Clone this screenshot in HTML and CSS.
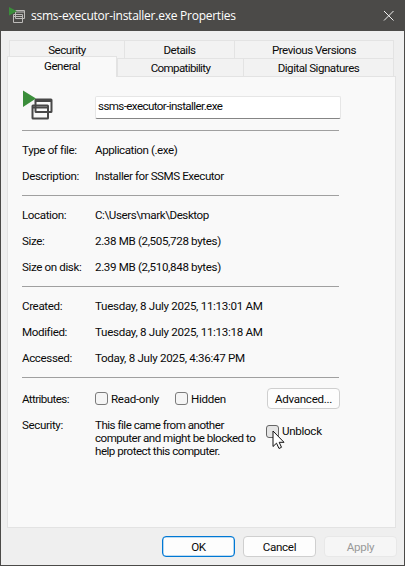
FILE: index.html
```html
<!DOCTYPE html>
<html lang="en">
<head>
<meta charset="utf-8">
<title>ssms-executor-installer.exe Properties</title>
<link rel="stylesheet" href="styles.css">
</head>
<body>
<div class="window">
  <header class="titlebar">
    <svg class="title-icon" width="18" height="18" viewBox="0 0 18 18"><g fill="none" stroke="#bdbbb9"><path d="M6.500 4.500h9v8h-9zM7 6h8.500"/><path d="M4.500 8.500h9v8h-9zM4.500 10.500h9"/></g><path d="M0 1l8 4.200L0 9.500z" fill="#3b8e3b"/></svg>
    <span class="title">ssms-executor-installer.exe Properties</span>
    <svg class="close" width="12" height="12" viewBox="0 0 12 12"><path d="M1 1l9.500 9.500M10.500 1L1 10.500" fill="none" stroke="#f2f2f2"/></svg>
  </header>
  <main class="body">
    <nav class="tabs">
      <div class="tab-row back">
        <span class="tab security">Security</span><span class="tab details">Details</span><span class="tab versions">Previous Versions</span>
      </div>
      <div class="tab-row front">
        <span class="tab general">General</span><span class="tab compat">Compatibility</span><span class="tab signatures">Digital Signatures</span>
      </div>
    </nav>
    <div class="panel">
      <div class="file-head">
        <svg class="file-icon" width="32" height="32" viewBox="0 0 32 32"><g fill="none" stroke="#484848" stroke-width="2"><rect x="13.500" y="9.500" width="16" height="12.500" rx=".5"/><path d="M13 11h16.500"/><rect x="10.500" y="15.500" width="15.500" height="13" rx=".5"/><path d="M10 17.500h16"/></g><path d="M1 .5l13 8L1 17z" fill="#3b8e3b"/></svg>
        <div class="name-box">ssms-executor-installer.exe</div>
      </div>
      <section class="group">
        <div class="row"><span class="label">Type of file:</span><span class="tight">Application (.exe)</span></div>
        <div class="row"><span class="label">Description:</span><span class="tight">Installer for SSMS Executor</span></div>
      </section>
      <section class="group">
        <div class="row"><span class="label">Location:</span><span class="tight">C:\Users\mark\Desktop</span></div>
        <div class="row"><span class="label">Size:</span><span class="size">2.38 MB (2,505,728 bytes)</span></div>
        <div class="row"><span class="label">Size on disk:</span><span class="size">2.39 MB (2,510,848 bytes)</span></div>
      </section>
      <section class="group">
        <div class="row"><span class="label">Created:</span><span>Tuesday, 8 July 2025, 11:13:01 AM</span></div>
        <div class="row"><span class="label">Modified:</span><span>Tuesday, 8 July 2025, 11:13:18 AM</span></div>
        <div class="row"><span class="label">Accessed:</span><span>Today, 8 July 2025, 4:36:47 PM</span></div>
      </section>
      <section class="group last">
        <div class="attributes"><span class="label attr">Attributes:</span><span class="option readonly"><i class="check"></i>Read-only</span><span class="option hidden"><i class="check"></i>Hidden</span><span class="button">Advanced...</span></div>
        <div class="security-row"><span class="label">Security:</span><p class="note">This file came from another<br>computer and might be blocked to<br>help protect this computer.</p>
          <span class="option unblock"><i class="check hover"></i>Unblock<svg class="cursor" width="13" height="20" viewBox="0 0 13 20"><path d="M1 1v15.500l3.500-3.300 2.500 5.300 2.500-1.200-2.300-5H12z" fill="#fff" stroke="#111"/></svg></span></div>
      </section>
    </div>
    <footer class="actions"><span class="button primary">OK</span><span class="button">Cancel</span><span class="button disabled">Apply</span></footer>
  </main>
</div>
</body>
</html>
```
FILE: styles.css
```css
* { box-sizing: border-box; }
body { margin: 0; font: 11.6px/14px Roboto, "Open Sans", sans-serif; letter-spacing: -.3px; color: #0a0a0a; }
.window { width: 405px; height: 566px; border: 1px solid #4b4a48; border-top: 0; background: #efefef; }
.titlebar { display: flex; align-items: center; height: 31px; padding: 0 9px 0 8px; background: #4b4a48; color: #fff; margin: 0 -1px; }
.title-icon { margin: 0 4px 1px 1px; }
.title { flex: 1; font: 12px/16px "Open Sans", sans-serif; letter-spacing: -.25px; white-space: nowrap; }
.close { margin-right: 1px; }
.body { padding: 9px 8px 0 6px; }
.tabs { height: 36px; position: relative; z-index: 1; letter-spacing: -.5px; }
.tab-row { display: flex; height: 18px; padding-right: 2px; }
.tab { background: #f2f2f2; border: 1px solid #e3e3e3; border-bottom: 0; border-right: 0; text-align: center; line-height: 18px; height: 18px; }
.tab:last-child { border-right: 1px solid #e3e3e3; }
.back { padding-left: 2px; }
.security { width: 115px; }
.details { width: 110px; }
.versions { flex: 1; }
.general { width: 110px; height: 21px; margin-top: -2px; background: #f9f9f9; border-right: 1px solid #e3e3e3; }
.compat { width: 126px; letter-spacing: -.65px; line-height: 19px; }
.signatures { flex: 1; line-height: 19px; }
.panel { height: 452px; border: 1px solid #e3e3e3; background: #f9f9f9; padding: 0 54px 0 14px; }
.file-head { display: flex; height: 53px; padding-top: 13px; }
.file-icon { margin-right: 41px; }
.name-box { width: 246px; height: 23px; margin-top: 6px; padding: 0 2px; line-height: 19px; letter-spacing: -.6px; background: #fff; border: 1px solid #e6e6e6; border-bottom-color: #858585; border-radius: 2px; flex: none; }
.group { border-top: 1px solid #a0a0a0; padding: 6px 0; width: 317px; }
.row { display: flex; height: 26px; align-items: center; white-space: nowrap; }
.label { width: 73px; flex: none; letter-spacing: -.38px; }
.attr { letter-spacing: -.6px; }
.tight { letter-spacing: -.43px; }
.size { letter-spacing: -.35px; }
.last { padding-top: 10px; }
.attributes { display: flex; align-items: center; height: 21px; }
.option { display: flex; align-items: center; height: 20px; flex: none; }
.check { width: 13px; height: 13px; border: 1px solid #7b7b7b; border-radius: 3px; background: #f5f5f5; margin-right: 3px; flex: none; }
.readonly { width: 80px; }
.hidden { width: 92px; }
.button { display: flex; justify-content: center; align-items: center; width: 73px; height: 21px; border: 1px solid #cfcfcf; border-radius: 4px; background: #fdfdfd; flex: none; }
.security-row { display: flex; padding-top: 9px; }
.note { margin: 0; width: 171px; line-height: 13px; letter-spacing: -.5px; white-space: nowrap; flex: none; padding-top: 1px; }
.unblock { position: relative; margin-top: 3px; }
.hover { background: #e5e5e5; border-color: #666; }
.cursor { position: absolute; left: 6px; top: 9px; }
.actions { display: flex; justify-content: flex-end; gap: 8px; padding-top: 8px; margin-right: -1px; }
.primary { border-color: #0078d4; box-shadow: inset 0 0 0 .3px #0078d4; }
.disabled { color: #999; border-color: #e8e8e8; background: #f6f6f6; }
```
